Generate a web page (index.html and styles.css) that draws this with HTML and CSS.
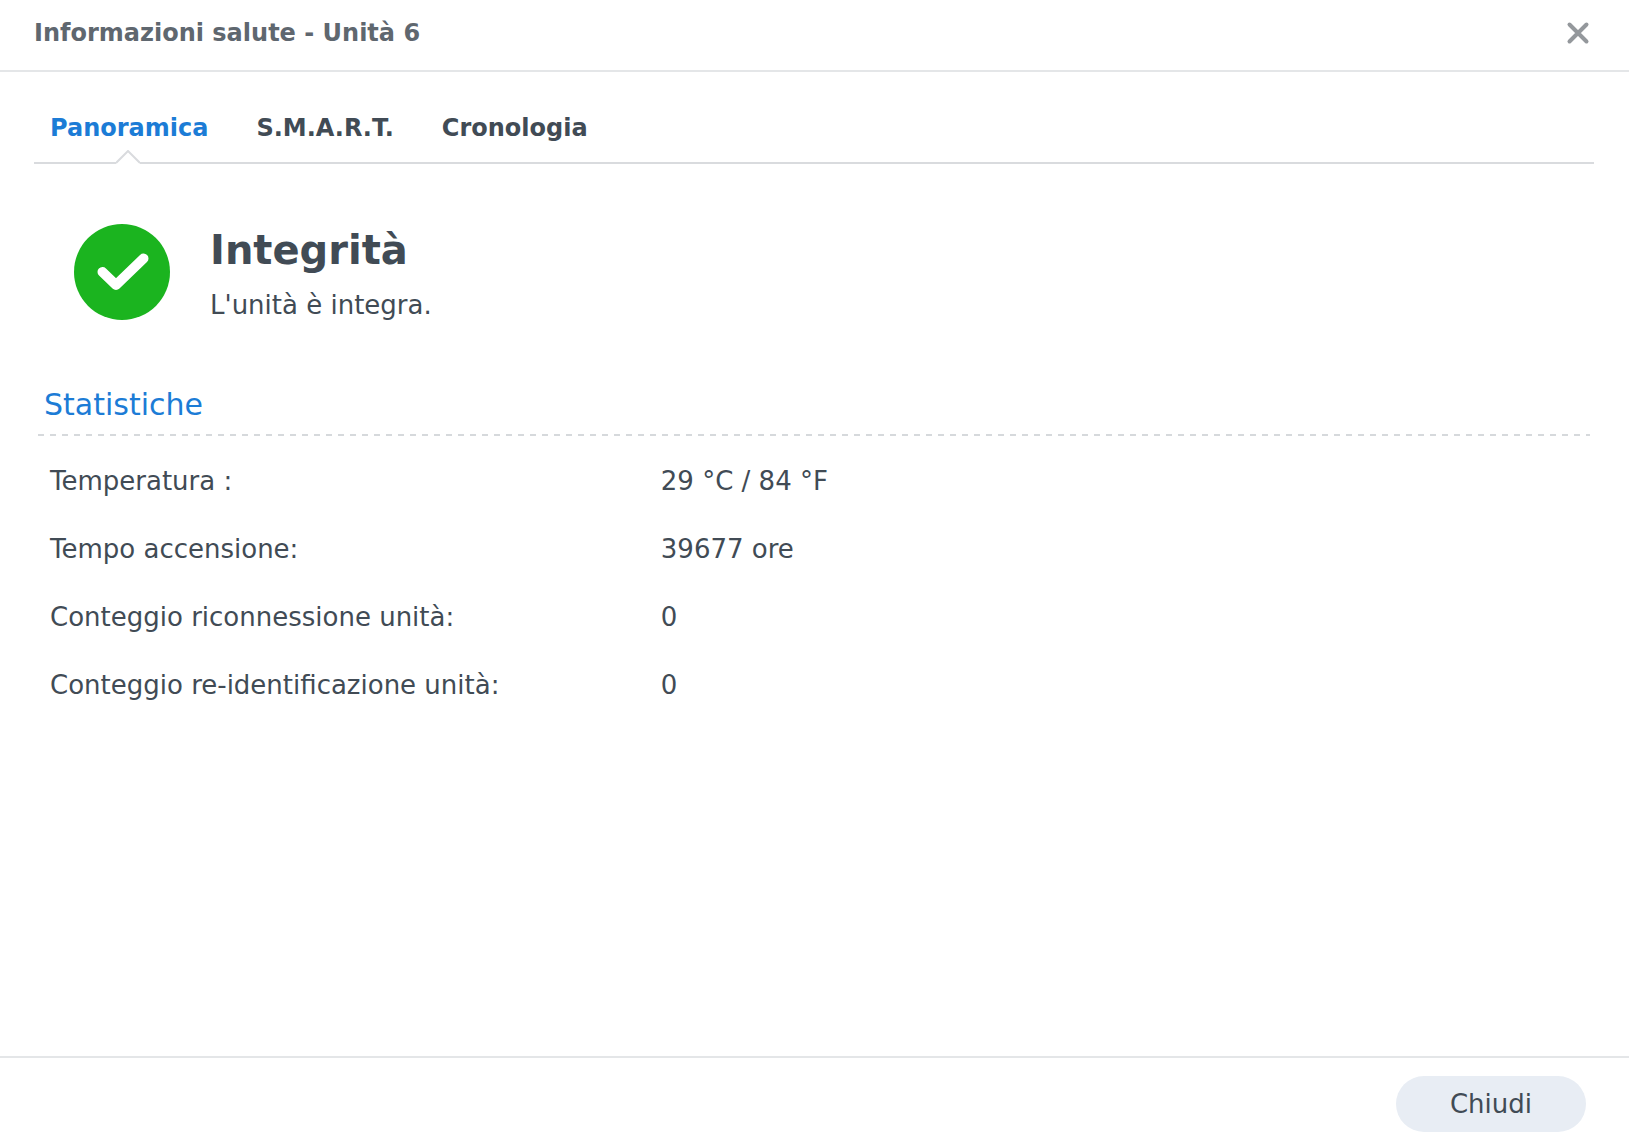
FILE: index.html
```html
<!DOCTYPE html>
<html lang="it">
<head>
  <meta charset="UTF-8" />
  <meta name="viewport" content="width=device-width, initial-scale=1" />
  <title>Informazioni salute - Unità 6</title>
  <link rel="stylesheet" href="styles.css">
</head>
<body>
  <header class="window-header">
    <h1>Informazioni salute - Unità 6</h1>
    <button class="close-btn" type="button" aria-label="Chiudi finestra">
      <svg viewBox="0 0 24 24" width="24" height="24"><path d="M3.5 3.5L20.5 20.5M20.5 3.5L3.5 20.5" /></svg>
    </button>
  </header>

  <main>
    <nav class="tabs">
      <a href="#panoramica" class="tab active">Panoramica
        <svg class="notch" viewBox="0 0 24 14" width="24" height="14"><path d="M0 14V13L12 1L24 13V14Z" /><polyline points="0,13 12,1 24,13" /></svg>
      </a>
      <a href="#smart" class="tab">S.M.A.R.T.</a>
      <a href="#cronologia" class="tab">Cronologia</a>
    </nav>

    <section class="status">
      <svg class="status-icon" viewBox="0 0 96 96" width="96" height="96">
        <circle cx="48" cy="48" r="48" />
        <path d="M28.5 48L42 61L69.5 34.5" />
      </svg>
      <div>
        <h2>Integrità</h2>
        <p>L'unità è integra.</p>
      </div>
    </section>

    <section class="stats">
      <h3>Statistiche</h3>
      <table>
        <tr><th scope="row">Temperatura :</th><td>29 °C / 84 °F</td></tr>
        <tr><th scope="row">Tempo accensione:</th><td>39677 ore</td></tr>
        <tr><th scope="row">Conteggio riconnessione unità:</th><td>0</td></tr>
        <tr><th scope="row">Conteggio re-identificazione unità:</th><td>0</td></tr>
      </table>
    </section>
  </main>

  <footer>
    <button class="btn" type="button">Chiudi</button>
  </footer>
</body>
</html>
```
FILE: styles.css
```css
:root {
  --text: #414b55;
  --title: #5f676f;
  --blue: #1c7cd6;
  --line: #e4e6e8;
  --tab-line: #d9dbde;
}

* {
  box-sizing: border-box;
  margin: 0;
  padding: 0;
}

body {
  display: flex;
  flex-direction: column;
  min-height: 100vh;
  background: #fff;
  color: var(--text);
  font-family: Verdana, 'DejaVu Sans', sans-serif;
  font-size: 26px;
}

button {
  border: none;
  font: inherit;
  color: inherit;
  cursor: pointer;
}

.window-header {
  display: flex;
  align-items: center;
  justify-content: space-between;
  height: 72px;
  padding: 0 39px 4px 34px;
  border-bottom: 2px solid var(--line);
}

h1 {
  font-size: 24px;
  color: var(--title);
}

.close-btn {
  display: flex;
  background: none;
}

.close-btn svg {
  fill: none;
  stroke: #94989c;
  stroke-width: 4;
  stroke-linecap: round;
}

main {
  flex: 1;
  padding: 32px 35px 0 34px;
}

.tabs {
  display: flex;
  gap: 48px;
  height: 60px;
  padding: 0 16px;
  border-bottom: 2px solid var(--tab-line);
}

.tab {
  position: relative;
  color: var(--text);
  font-size: 24px;
  font-weight: bold;
  line-height: 48px;
  text-decoration: none;
}

.tab.active {
  color: var(--blue);
}

/* sits on the line under the current tab */
.notch {
  position: absolute;
  bottom: -2px;
  left: 50%;
  margin-left: -13px;
}

.notch path {
  fill: #fff;
}

.notch polyline {
  fill: none;
  stroke: var(--tab-line);
  stroke-width: 2;
}

.status {
  display: flex;
  gap: 40px;
  padding: 60px 40px 0;
}

.status-icon circle {
  fill: #1bb41f;
}

.status-icon path {
  fill: none;
  stroke: #fff;
  stroke-width: 10;
  stroke-linecap: round;
  stroke-linejoin: round;
}

h2 {
  font-size: 40px;
  line-height: 52px;
}

.status p {
  line-height: 58px;
}

.stats {
  padding: 42px 4px 0;
}

h3 {
  padding: 0 6px 2px;
  background: repeating-linear-gradient(to right, #d6d9dc 0 6px, transparent 6px 12px) left bottom / 100% 2px no-repeat;
  color: var(--blue);
  font-size: 30px;
  font-weight: normal;
  line-height: 58px;
}

table {
  width: 100%;
  margin-top: 11px;
  border-collapse: collapse;
}

th,
td {
  height: 68px;
  text-align: left;
  font-weight: normal;
}

th {
  width: 40%;
  padding-left: 12px;
}

td {
  padding-left: 2px;
}

footer {
  display: flex;
  justify-content: flex-end;
  padding: 18px 43px 12px;
  border-top: 2px solid var(--line);
}

.btn {
  min-width: 190px;
  height: 56px;
  border-radius: 28px;
  background: #e8edf4;
}
```
